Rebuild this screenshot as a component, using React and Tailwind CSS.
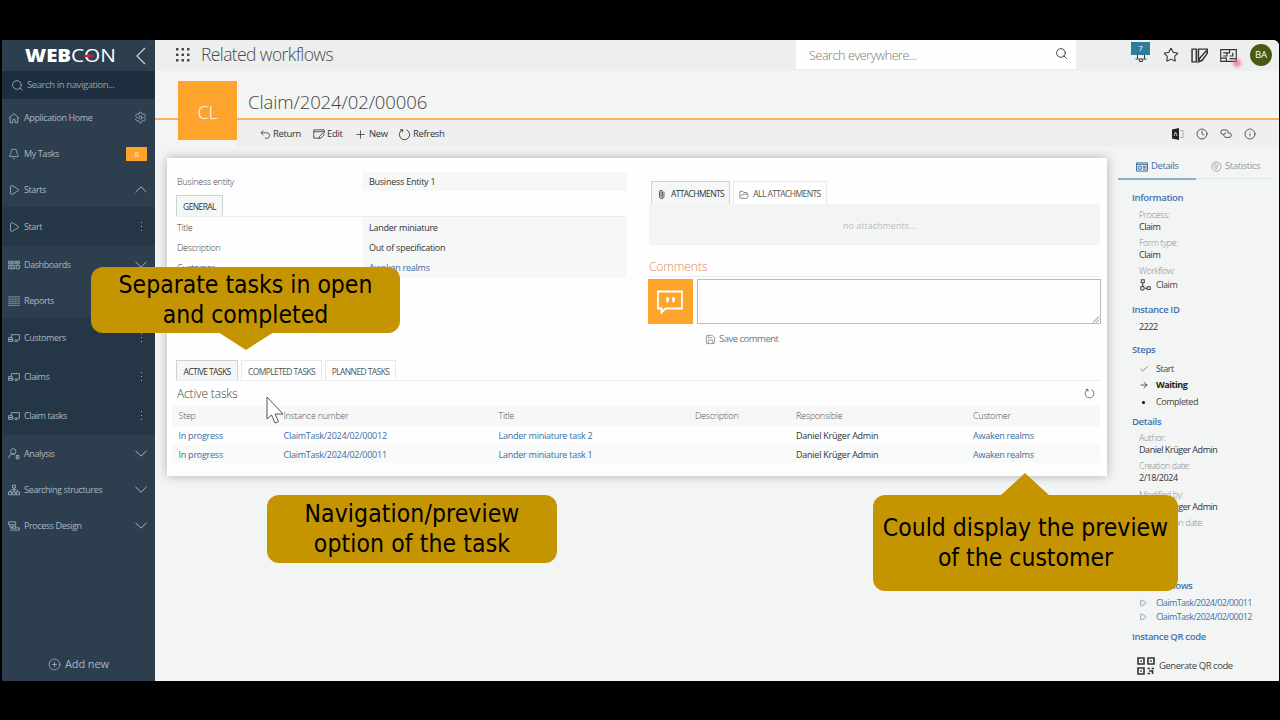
import React from 'react'
import {
  Bell,
  Check,
  ArrowRight,
  CirclePlus,
  Clock,
  FolderOpen,
  Info,
  Paperclip,
  Play,
  Plus,
  Save,
  Search,
  Settings,
  Star,
} from 'lucide-react'

// Small line icon on a 16px grid
function Glyph({ children, className, width = 1.1 }) {
  return (
    <svg
      viewBox="0 0 16 16"
      className={className}
      fill="none"
      stroke="currentColor"
      strokeWidth={width}
    >
      {children}
    </svg>
  )
}

const HomeIcon = (props) => (
  <Glyph {...props}>
    <path d="M1 8.500 8 2l7 6.500M3 7v7.300h3.500V11a1.500 1.500 0 0 1 3 0v3.300H13V7" />
  </Glyph>
)

const DashboardIcon = (props) => (
  <Glyph {...props}>
    <path d="M.8 3h6v3.500h-6zM9 3h6.200v3.500H9zM.8 8.500h8V13h-8zM11 8.500h4.200V13H11zM2.500 4.800h3M10.500 4.800h3M2.500 10.800h4.500" />
  </Glyph>
)

const ReportIcon = (props) => (
  <Glyph {...props}>
    <path
      strokeDasharray="3.200 .8"
      d="M.5 2.500h15.500M.5 5.400h15.500M.5 8.200h15.500M.5 11h15.500M.5 13.800h15.500"
    />
  </Glyph>
)

const FormsIcon = (props) => (
  <Glyph {...props}>
    <path d="M4.500 7V3.500h10.700v7.300H8.500M.8 7.500h5V10h-5zM2 10h4.500v2.500H.8V10M9 12.500h4" />
  </Glyph>
)

const AnalysisIcon = (props) => (
  <Glyph {...props}>
    <circle cx="7" cy="4.500" r="3.600" />
    <path d="M1 13.500C1 10 3.500 8 6 8c1.500 0 2.500.5 3.300 1.300M11 14.500V10h3.500v4.500zM11 12.200h3.500" />
  </Glyph>
)

const StructureIcon = (props) => (
  <Glyph {...props}>
    <path d="M6 1.500h4v3.800H6zM.8 10.500h3.700v4H.8zM6.200 10.500h3.700v4H6.200zM11.500 10.500h3.700v4h-3.700zM8 5.300v5.200M2.700 10.500C2.700 8 5 7.500 8 7.500s5.300.5 5.300 3" />
  </Glyph>
)

const ProcessIcon = (props) => (
  <Glyph {...props}>
    <path d="M.8 2.500h9.500v3.800H.8zM2.500 6.300v3.200h3.700M6.200 8h4v3h-4zM4 9.500V13.500h11.200v-3h-5" />
  </Glyph>
)

const RefreshIcon = (props) => (
  <Glyph {...props}>
    <path d="M5.500 2.300a6.300 6.300 0 1 0 5 0M5.800 5.200V2.200H2.600" />
  </Glyph>
)

const WorkflowIcon = (props) => (
  <Glyph {...props} width={1.4}>
    <path d="M3 1h4v4H3zM5 5v5M7.500 12.200h3M11 10.300h4v3.800h-4z" />
    <circle cx="4.500" cy="12.300" r="2.500" />
  </Glyph>
)

const GaugeIcon = (props) => (
  <Glyph {...props}>
    <circle cx="8" cy="8" r="6.800" />
    <circle cx="7.500" cy="9.500" r="1.600" />
    <path d="m8.500 8.300 3-4M3.500 8a4.500 4.500 0 0 1 5-4.200" />
  </Glyph>
)

const Chevron = ({ up }) => (
  <svg viewBox="0 0 12 7" className="h-[7px] w-3" fill="none" stroke="currentColor" strokeWidth="1">
    <path d={up ? 'M.5 6.200 6 .8l5.500 5.400' : 'M.5.8 6 6.200 11.500.8'} />
  </svg>
)

const navItems = [
  { label: 'Application Home', icon: HomeIcon, end: 'gear' },
  { label: 'My Tasks', icon: Bell, end: 'badge' },
  { label: 'Starts', icon: Play, end: 'up' },
  { label: 'Start', icon: Play, end: 'dots', sub: true },
  { label: 'Dashboards', icon: DashboardIcon, end: 'down' },
  { label: 'Reports', icon: ReportIcon, end: 'down' },
  { label: 'Customers', icon: FormsIcon, end: 'dots', sub: true },
  { label: 'Claims', icon: FormsIcon, end: 'dots', sub: true },
  { label: 'Claim tasks', icon: FormsIcon, end: 'dots', sub: true },
  { label: 'Analysis', icon: AnalysisIcon, end: 'down' },
  { label: 'Searching structures', icon: StructureIcon, end: 'down' },
  { label: 'Process Design', icon: ProcessIcon, end: 'down' },
]

function NavEnd({ type }) {
  if (type === 'gear') return <Settings className="size-[13px]" strokeWidth={1.5} />
  if (type === 'badge') {
    return (
      <span className="flex h-3.5 w-[21px] items-center justify-center bg-[#fda32b] text-[8px] text-white/80">
        8
      </span>
    )
  }
  if (type === 'up') return <Chevron up />
  if (type === 'down') return <Chevron />
  return (
    <span className="flex w-3 flex-col items-center gap-[3px]">
      <i className="size-px bg-[#a5b2bd]" />
      <i className="size-px bg-[#a5b2bd]" />
      <i className="size-px bg-[#a5b2bd]" />
    </span>
  )
}

function Sidebar() {
  return (
    <aside className="flex w-[153px] shrink-0 flex-col bg-[#2d3e4f] text-[#a9b6c2]">
      <div className="flex h-[31px] items-center justify-between pr-[9px] pl-[22px]">
        <svg width="94" height="28" viewBox="0 0 94 28" fill="#fff">
          <text x="1" y="20" fontSize="18" fontWeight="800" textLength="46" lengthAdjust="spacingAndGlyphs" fontFamily="Open Sans, sans-serif">
            WEB
          </text>
          <text x="47" y="20" fontSize="18" textLength="45" lengthAdjust="spacingAndGlyphs" fontFamily="Open Sans, sans-serif">
            CON
          </text>
          <path d="M60 14h10" stroke="#c8203c" strokeWidth="2" />
          <circle cx="65" cy="14" r="2" fill="#c8203c" />
        </svg>
        <svg viewBox="0 0 10 18" className="h-[18px] w-2.5" fill="none" stroke="#c9d2d9" strokeWidth="1.200">
          <path d="M9 1 1 9l8 8" />
        </svg>
      </div>
      <div className="flex h-7 items-center gap-[3px] bg-[#1d2f3e] pt-px pl-[9px] text-[9.5px] tracking-[-0.4px] text-[#93a2ae]">
        <Search className="size-[13px]" strokeWidth={1.8} />
        Search in navigation...
      </div>
      <nav className="text-[9px] tracking-[-0.4px]">
        {navItems.map(({ label, icon: Icon, end, sub }) => (
          <div
            key={label}
            className={`flex items-center pr-2 pl-1.5 ${sub ? 'h-[39px] bg-[#253746]' : 'h-9 pt-px'}`}
          >
            <Icon className="mr-1 size-3 shrink-0" strokeWidth={1.6} />
            <span className="flex-1 whitespace-nowrap">{label}</span>
            <NavEnd type={end} />
          </div>
        ))}
      </nav>
      <div className="mt-auto flex h-[33px] items-center justify-center gap-1 text-[11px] tracking-[-0.1px]">
        <CirclePlus className="size-[13px]" strokeWidth={1.4} />
        Add new
      </div>
    </aside>
  )
}

function TopBar() {
  return (
    <div className="flex h-[31px] items-center bg-[#edeeee] pr-[7px] pb-px pl-[21px] text-[#333]">
      <svg viewBox="0 0 14 14" className="size-3.5" fill="#444">
        {[0, 5.5, 11].map((y) =>
          [0, 5.5, 11].map((x) => <rect key={`${x}-${y}`} x={x} y={y} width="2.500" height="2.500" rx=".6" />)
        )}
      </svg>
      <h1 className="ml-[11px] w-[595px] pb-0.5 text-[17.5px] leading-[28px] font-light tracking-[-0.6px] text-[#4a4a4a]">
        Related workflows
      </h1>
      <div className="flex h-[29px] w-[280px] items-center justify-between self-start bg-[#fdfefd] pr-2 pl-[13px] text-[12.5px] font-light tracking-[-0.4px] text-[#777]">
        <span className="pt-1">Search everywhere...</span>
        <Search className="mb-0.5 size-[13px] text-[#444]" strokeWidth={1.8} />
      </div>
      <div className="ml-auto flex items-center">
        <div className="mr-[13px] flex h-[27px] w-[19px] flex-col items-center">
          <span className="flex h-[13px] w-full shrink-0 items-center justify-center bg-[#2f7d9c] text-[8px] text-white">
            7
          </span>
          <svg viewBox="0 0 12 8" className="h-2 w-3" fill="none" stroke="#333">
            <path d="M2.500 0v3.500M9.500 0v3.500M.5 4h11M4.500 4.500v2h3v-2" />
          </svg>
        </div>
        <Star className="mr-3 size-4" strokeWidth={1.6} />
        <Glyph className="mr-3 size-[17px]" width={1.4}>
          <path d="M1 2h4v12H1zM7 14V2h8.300v4L10.500 12.500 7 14l1.500-3.800L14.500 3.500" />
        </Glyph>
        <div className="relative mr-[13px] h-4 w-[17px]">
          <Glyph className="size-[17px]">
            <path d="M.7 2.500h14.600v11H.7zM3 5.500h3.500v3H3M6.500 5.500H9v-3M9 8.500h3v-3M.7 10.500H6v3M9 11h6" />
          </Glyph>
          <i className="absolute -right-1 -bottom-1 size-2 rounded-full bg-[#ee6b85]/70 blur-[1.5px]" />
        </div>
        <span className="flex size-[22px] items-center justify-center rounded-full bg-[#475a13] text-[9.5px] text-white">
          BA
        </span>
      </div>
    </div>
  )
}

function FormHeader() {
  return (
    <div className="flex h-[87px] bg-[#f3f4f4]">
      {/* the orange rule runs on both sides of the tile */}
      <div className="w-[23px] pt-[47px]">
        <div className="h-0.5 bg-[#f4b263]" />
      </div>
      <div className="mt-2.5 flex size-[59px] items-center justify-center bg-[#fea42d] pt-1 text-[18px] font-light tracking-[-0.2px] text-white">
        CL
      </div>
      <div className="flex flex-1 flex-col">
        <div className="flex h-[47px] items-center pt-[15px] pl-[11px]">
          <h2 className="text-[18.5px] font-light tracking-[-0.1px] text-[#444]">Claim/2024/02/00006</h2>
        </div>
        <div className="h-0.5 bg-[#f4b263]" />
        <div className="flex h-[27px] items-center bg-[#eeefee] pt-px pr-[23px] pl-[23px] text-[9.5px] tracking-[-0.35px] text-[#333]">
          <Glyph className="mr-0.5 size-[11px]">
            <path d="M5 2 1.500 5.500 5 9M1.500 5.500H10a4 4 0 0 1 0 8H7" />
          </Glyph>
          <span className="w-10">Return</span>
          <Glyph className="mr-0.5 size-3">
            <path d="M15 7V2.500H1v11h7M1 5h14M8 14l.8-3L13 7l2 2-4 4.200z" />
          </Glyph>
          <span className="w-[27px]">Edit</span>
          <Plus className="mr-0.5 size-[13px]" strokeWidth={1.4} />
          <span className="w-[29px]">New</span>
          <RefreshIcon className="mr-0.5 size-[13px]" />
          <span>Refresh</span>
          <div className="ml-auto flex items-center gap-3">
            <svg viewBox="0 0 12 12" className="size-3">
              <path d="M0 1.500 7 0v12L0 10.500z" fill="#222" />
              <path d="M8 2.500h3v7H8" fill="none" stroke="#aaa" />
              <path d="m2 8 1.500-4L5 8" fill="none" stroke="#eee" strokeWidth=".8" />
            </svg>
            <Clock className="size-3" strokeWidth={1.6} />
            <Glyph className="size-3">
              <path d="M5 8.500H4a3 3 0 0 1 0-6h4a3 3 0 0 1 2.500 4.500M11 6.500h1a3 3 0 0 1 0 6H8A3 3 0 0 1 5.500 8c.5-1 1.500-1.500 2.500-1.500" />
            </Glyph>
            <Info className="size-3" strokeWidth={1.5} />
          </div>
        </div>
      </div>
    </div>
  )
}

function Tab({ active, className, children }) {
  return (
    <div
      className={`flex items-center justify-center border border-b-0 pt-[3px] text-[8.5px] tracking-[-0.6px] whitespace-nowrap ${
        active ? 'border-[#cfd0d0] bg-[#f5f6f6] text-[#333]' : 'border-[#e8e9e9] text-[#555]'
      } ${className}`}
    >
      {children}
    </div>
  )
}

function Field({ label, children, className, link }) {
  return (
    <div className={`flex items-center ${className}`}>
      <span className="w-[185px] font-light text-[#444]">{label}</span>
      <span
        className={`flex w-[265px] items-center self-stretch bg-[#f6f7f7] pl-[7px] ${
          link ? 'text-[#3e6da5]' : 'text-[#333]'
        }`}
      >
        {children}
      </span>
    </div>
  )
}

const tasks = [
  { number: 'ClaimTask/2024/02/00012', title: 'Lander miniature task 2' },
  { number: 'ClaimTask/2024/02/00011', title: 'Lander miniature task 1' },
]

function TaskTable() {
  const grid = 'grid grid-cols-[105px_215px_196.5px_101px_177px_1fr] items-center pl-[6.5px]'
  return (
    <div className="mr-[7px] ml-[5px] text-[9px] tracking-[-0.25px]">
      <div className={`${grid} h-5 bg-[#f6f7f7] font-light text-[#555]`}>
        <span>Step</span>
        <span>Instance number</span>
        <span>Title</span>
        <span>Description</span>
        <span>Responsible</span>
        <span>Customer</span>
      </div>
      {tasks.map((task) => (
        <div key={task.number} className={`${grid} h-[18.5px] pt-px text-[#3e6da5] odd:bg-[#f8f9f9]`}>
          <span>In progress</span>
          <span>{task.number}</span>
          <span>{task.title}</span>
          <span />
          <span className="text-[#333]">Daniel Krüger Admin</span>
          <span>Awaken realms</span>
        </div>
      ))}
    </div>
  )
}

function FormCard() {
  return (
    <section className="h-[318px] w-[940px] shrink-0 bg-[#fdfefd] shadow-[0_0_10px_rgba(0,0,0,0.28)]">
      <div className="flex h-[202px]">
        <div className="w-[481px] pt-3.5 pl-2.5 text-[9px] tracking-[-0.25px]">
          <Field label="Business entity" className="h-[19px]">Business Entity 1</Field>
          <div className="mt-1 -ml-px flex h-[21px]">
            <Tab active className="w-[47px]">GENERAL</Tab>
          </div>
          <div className="w-[450px] border-t border-[#eceded]">
            <Field label="Title" className="h-[21px]">Lander miniature</Field>
            <Field label="Description" className="h-5">Out of specification</Field>
            <Field label="Customer" className="h-5" link>Awaken realms</Field>
          </div>
        </div>
        <div className="w-[453px] pt-[23px]">
          <div className="ml-[3px] flex h-[23px] gap-[3px]">
            <Tab active className="w-[79px] gap-1">
              <Paperclip className="mr-px size-[9px] -rotate-45" strokeWidth={2} />
              ATTACHMENTS
            </Tab>
            <Tab className="w-[94px] gap-1">
              <FolderOpen className="size-2.5" strokeWidth={1.6} />
              ALL ATTACHMENTS
            </Tab>
          </div>
          <div className="ml-px flex h-[41px] w-[451px] items-center justify-center bg-[#f3f4f4] pt-0.5 pl-2.5 text-[9px] text-[#bcbcbc]">
            no attachments...
          </div>
          <h3 className="mt-[13px] ml-px border-b border-[#ececec] text-[12px] leading-[18px] font-light tracking-[-0.1px] text-[#dd8a5c]">
            Comments
          </h3>
          <div className="mt-0.5 flex h-[45px] gap-1">
            <div className="flex w-[45px] items-center justify-center bg-[#fea42d] pr-0.5 text-white">
              <svg viewBox="0 0 28 24" className="h-6 w-7" fill="none" stroke="currentColor" strokeWidth="1.800">
                <path d="M2 1.500h24v17H9.500L5.500 22.500v-4H2z" />
                <path d="M10 7.500h3v3l-1.500 2h-1V10H10zM16 7.500h3v3l-1.500 2h-1V10H16z" fill="currentColor" stroke="none" />
              </svg>
            </div>
            <div className="flex flex-1 items-end justify-end border border-[#b9bbbd]">
              <svg viewBox="0 0 8 8" className="size-2" stroke="#777" strokeWidth=".9">
                <path d="M1 7.500 7 1.500M4 7.500 7 4.500" />
              </svg>
            </div>
          </div>
          <div className="mt-2 flex items-center gap-[3px] pl-[57px] text-[9.5px] leading-[14px] tracking-[-0.5px] text-[#777]">
            <Save className="size-[11px]" strokeWidth={1.6} />
            Save comment
          </div>
        </div>
      </div>
      <div className="ml-[9px] flex h-[21px] w-[925px] gap-[3px] border-b border-[#eceded]">
        <Tab active className="w-[62px]">ACTIVE TASKS</Tab>
        <Tab className="w-[81px]">COMPLETED TASKS</Tab>
        <Tab className="w-[71px]">PLANNED TASKS</Tab>
      </div>
      <div className="flex h-[25px] items-center justify-between pr-3 pl-2.5 text-[12px] font-light tracking-[-0.15px] text-[#444]">
        Active tasks
        <RefreshIcon className="size-[11px]" />
      </div>
      <TaskTable />
    </section>
  )
}

const Heading = ({ className, children }) => (
  <h4 className={`text-[9.5px] leading-3 font-semibold tracking-[-0.35px] text-[#4273ad] ${className}`}>{children}</h4>
)

const Label = ({ className = 'mt-1', children }) => (
  <div className={`pl-[7px] leading-3 font-light text-[#8d8d8d] ${className}`}>{children}</div>
)

const Value = ({ className = '', children }) => (
  <div className={`pl-[7px] leading-3 text-[#333] ${className}`}>{children}</div>
)

const Step = ({ className, icon, children }) => (
  <div className={`flex items-center pl-[7px] leading-3 ${className}`}>
    <span className="flex w-[17px]">{icon}</span>
    {children}
  </div>
)

const QrIcon = () => (
  <svg viewBox="0 0 18 18" className="size-[18px]" fill="none" stroke="#333" strokeWidth="1.600">
    <path d="M1 1h6v6H1zM11 1h6v6h-6zM1 11h6v6H1z" />
    <path d="M3.200 4h1.600M13.200 4h1.600M3.200 14h1.600M10.500 11.500h2.500M14.500 11.500H17M12 14h3M10.500 16.500H13M15.500 13v4" />
  </svg>
)

function InfoPanel() {
  return (
    <aside className="w-[156px] text-[9px] tracking-[-0.45px] text-[#444]">
      <div className="flex h-[22px] text-[9.5px] tracking-[-0.4px]">
        <div className="flex w-[78px] items-center gap-[3px] border-b-2 border-[#86b4c6] pb-[3px] pl-[18px] text-[#3e6da5]">
          <Glyph className="size-3" width={1.3}>
            <path d="M.7 2.500h14.600v11H.7zM.7 4.500h14.600M3 7h4v4H3zM9 7h5M9 9h5M9 11h5" />
          </Glyph>
          Details
        </div>
        <div className="mb-px flex flex-1 items-center gap-[3px] border-b border-[#dce6ea] pb-[3px] pl-[15px] text-[#999]">
          <GaugeIcon className="size-[11px]" width={1.2} />
          Statistics
        </div>
      </div>
      <div className="pl-3.5">
        <Heading className="mt-3">Information</Heading>
        <Label className="mt-[5px]">Process:</Label>
        <Value>Claim</Value>
        <Label>Form type:</Label>
        <Value>Claim</Value>
        <Label>Workflow:</Label>
        <Step className="mt-0.5" icon={<WorkflowIcon className="size-3" />}>Claim</Step>
        <Heading className="mt-[13px]">Instance ID</Heading>
        <Value className="mt-[5px]">2222</Value>
        <Heading className="mt-[11px]">Steps</Heading>
        <Step className="mt-[7px]" icon={<Check className="size-2.5" strokeWidth={1.5} />}>Start</Step>
        <Step className="mt-1 font-bold text-[#222]" icon={<ArrowRight className="size-2.5" strokeWidth={1.8} />}>
          Waiting
        </Step>
        <Step className="mt-[5px]" icon={<i className="ml-[3px] size-[3px] rounded-full bg-black" />}>Completed</Step>
        <Heading className="mt-2">Details</Heading>
        <Label>Author:</Label>
        <Value>Daniel Krüger Admin</Value>
        <Label>Creation date:</Label>
        <Value className="mb-[5px]">2/18/2024</Value>
        <Label className="mt-0">Modified by:</Label>
        <Value>Daniel Krüger Admin</Value>
        <Label>Modification date:</Label>
        <Value>2/18/2024</Value>
        <Heading className="mt-[39px]">Subworkflows</Heading>
        <Step className="mt-[5px] tracking-[-0.57px] text-[#4273ad]" icon={<Play className="size-2" strokeWidth={1.8} />}>
          ClaimTask/2024/02/00011
        </Step>
        <Step className="mt-0.5 tracking-[-0.57px] text-[#4273ad]" icon={<Play className="size-2" strokeWidth={1.8} />}>
          ClaimTask/2024/02/00012
        </Step>
        <Heading className="mt-2">Instance QR code</Heading>
        <div className="mt-3.5 flex h-[18px] items-center gap-1 pl-[5px] text-[9.5px]">
          <QrIcon />
          Generate QR code
        </div>
      </div>
    </aside>
  )
}

function Callout({ className, children }) {
  return (
    <div
      className={`absolute flex items-center justify-center rounded-[12px] bg-[#c49500] text-center font-['DejaVu_Sans_Condensed','DejaVu_Sans',sans-serif] text-[24.5px] leading-[30px] whitespace-nowrap text-black [font-stretch:condensed] ${className}`}
    >
      {children}
    </div>
  )
}

function App() {
  return (
    <div className="relative h-[720px] w-[1280px] overflow-hidden bg-black pt-10 pr-px pl-0.5 font-['Open_Sans','Noto_Sans',sans-serif]">
      <div className="flex h-[641px] overflow-hidden rounded-tr-md bg-[#f3f4f4]">
        <Sidebar />
        <main className="flex flex-1 flex-col">
          <TopBar />
          <FormHeader />
          <div className="flex justify-between pr-[5px] pl-3">
            <FormCard />
            <InfoPanel />
          </div>
        </main>
      </div>

      <Callout className="top-[267px] left-[91px] h-[66px] w-[309px]">
        <span>Separate tasks in open<br />and completed</span>
        <i className="absolute top-[65px] left-[127px] h-[18px] w-[56px] bg-[#c49500] [clip-path:polygon(0_0,100%_0,50%_100%)]" />
      </Callout>
      <Callout className="top-[495px] left-[267px] h-[68px] w-[290px] tracking-[0.1px]">
        <span>Navigation/preview<br />option of the task</span>
      </Callout>
      <Callout className="top-[495px] left-[873px] h-24 w-[305px]">
        <span>Could display the preview<br />of the customer</span>
        <i className="absolute -top-[22px] left-[127px] h-[23px] w-[50px] bg-[#c49500] [clip-path:polygon(0_100%,100%_100%,50%_0)]" />
      </Callout>

      <svg viewBox="0 0 18 28" className="absolute top-[396px] left-[266px] h-7 w-[18px]">
        <path d="M1 1v22l4.500-4 3.500 8 3.500-1.500-3.500-7.500H17z" fill="#fff" stroke="#555" />
      </svg>
    </div>
  )
}

export default App
